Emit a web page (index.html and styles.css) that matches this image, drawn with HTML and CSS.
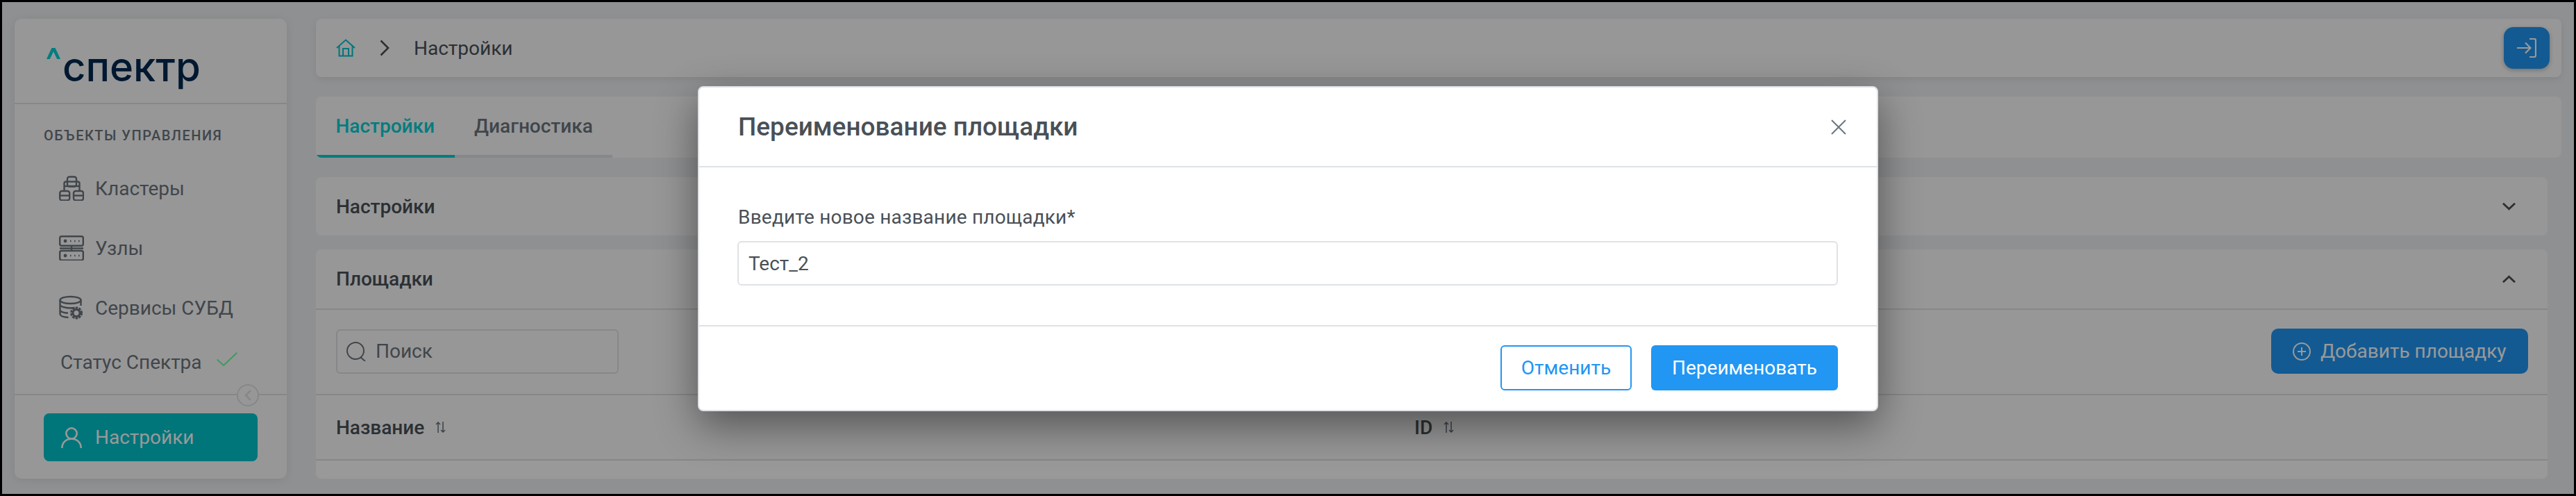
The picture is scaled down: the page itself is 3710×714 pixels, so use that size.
FILE: index.html
```html
<!DOCTYPE html>
<html lang="ru">
  <head>
    <meta charset="UTF-8" />
    <meta name="viewport" content="width=device-width, initial-scale=1.0" />
    <title>Спектр</title>
    <link rel="stylesheet" href="styles.css">
  </head>
  <body>
    <div class="app">
      <!-- sidebar -->
      <aside class="sidebar">
        <div class="logo">
          <svg class="logo-caret" viewBox="0 0 20 16"><path d="M0 16 L7.5 0 H12.5 L20 16 H15.2 L10 5.2 L4.8 16 Z" /></svg>
          <span class="logo-text">спектр</span>
        </div>
        <nav class="nav">
          <div class="nav-title">ОБЪЕКТЫ УПРАВЛЕНИЯ</div>
          <a class="nav-item">
            <svg class="nav-icon" viewBox="0 0 36 36" fill="none" stroke="currentColor" stroke-width="2.4">
              <rect x="12" y="1.5" width="13" height="14" rx="3" />
              <path d="M12 8.5H25" />
              <path d="M12 8.5H10a2.5 2.5 0 0 0-2.5 2.5V22M25 8.5h2a2.5 2.5 0 0 1 2.5 2.5V22" />
              <path d="M7.5 15H29.5" />
              <rect x="1.2" y="22" width="14" height="13.5" rx="3" />
              <path d="M1.2 28.5H15.2" />
              <rect x="21" y="22" width="14" height="13.5" rx="3" />
              <path d="M21 28.5H35" />
            </svg>
            Кластеры
          </a>
          <a class="nav-item">
            <svg class="nav-icon" viewBox="0 0 36 36" fill="none" stroke="currentColor" stroke-width="2.4">
              <rect x="1.2" y="1.2" width="33.6" height="13.6" rx="2.5" />
              <rect x="1.2" y="22" width="33.6" height="13.6" rx="2.5" />
              <path d="M18 15V22M1 18.5H35" />
              <circle cx="9" cy="8" r="2.4" fill="currentColor" stroke="none" />
              <circle cx="9" cy="29" r="2.4" fill="currentColor" stroke="none" />
              <path d="M16 8h1.5M22 8h1.5M28 8h1.5M16 29h1.5M22 29h1.5M28 29h1.5" />
            </svg>
            Узлы
          </a>
          <a class="nav-item">
            <svg class="nav-icon" viewBox="0 0 36 36" fill="none" stroke="currentColor" stroke-width="2.4">
              <ellipse cx="16.5" cy="7" rx="15" ry="5" />
              <path d="M1.5 7V27c0 2.5 4 4.5 12 5M31.5 7V15M1.5 13.5c0 2.5 6 5 15 5 2 0 4-.1 6-.5M1.5 21c0 2.5 5 4.3 11.5 4.8" />
              <circle cx="25" cy="25.5" r="6.5" stroke-width="5" stroke-dasharray="3 1.1" />
              <circle cx="25" cy="25.5" r="5" stroke-width="3" />
            </svg>
            Сервисы СУБД
          </a>
          <div class="nav-status">
            Статус Спектра
            <svg class="status-check" viewBox="0 0 30 20" fill="none" stroke="currentColor" stroke-width="2"><path d="M0.7 10.5 L10 19 L29.3 0.7" /></svg>
          </div>
        </nav>
        <div class="sidebar-footer">
          <span class="collapse-btn">
            <svg viewBox="0 0 12 18" fill="none" stroke="currentColor" stroke-width="2.6"><path d="M10 2 L3 9 L10 16" /></svg>
          </span>
          <a class="settings-btn">
            <svg class="settings-icon" viewBox="0 0 30 30" fill="none" stroke="currentColor" stroke-width="2.6"><circle cx="15" cy="9" r="7.7" /><path d="M1.3 30c0-8 6-13.3 13.7-13.3S28.700 22 28.700 30" /></svg>
            Настройки
          </a>
        </div>
      </aside>

      <!-- main content -->
      <main class="content">
        <header class="topbar">
          <svg class="home-icon" viewBox="0 0 28 26" fill="none" stroke="currentColor" stroke-width="2"><path d="M1 13 L14 1.500 L27 13" /><path d="M4.500 10.500V24.500H23.500V10.500" /><path d="M10 24.500V14H18V24.500" /></svg>
          <svg class="crumb-icon" viewBox="0 0 14 24" fill="none" stroke="currentColor" stroke-width="2.6"><path d="M1.500 1.500 L12 12 L1.500 22.500" /></svg>
          <span class="crumb">Настройки</span>
          <button class="exit-btn">
            <svg viewBox="0 0 28 28" fill="none" stroke="currentColor" stroke-width="2.200"><path d="M0 14H19M12 6.500 L19.500 14 L12 21.500" /><path d="M18 0.800H24.500Q27 .8 27 3.300V24.700Q27 27.200 24.500 27.200H18" /></svg>
          </button>
        </header>

        <div class="tabs">
          <div class="tab tab-active">Настройки</div>
          <div class="tab">Диагностика</div>
        </div>

        <section class="panel">
          <div class="panel-head panel-head-short">
            <span>Настройки</span>
            <svg class="panel-chevron" viewBox="0 0 20 12" fill="none" stroke="currentColor" stroke-width="3"><path d="M1 1.500 L10 10 L19 1.500" /></svg>
          </div>
        </section>

        <section class="panel panel-sites">
          <div class="panel-head">
            <span>Площадки</span>
            <svg class="panel-chevron" viewBox="0 0 20 12" fill="none" stroke="currentColor" stroke-width="3"><path d="M1 10.500 L10 2 L19 10.500" /></svg>
          </div>
          <div class="toolbar">
            <div class="search">
              <svg class="search-icon" viewBox="0 0 28 28" fill="none" stroke="currentColor" stroke-width="2"><circle cx="13" cy="13" r="12" /><path d="M20 22 L27 28" /></svg>
              Поиск
            </div>
            <button class="add-btn">
              <svg class="add-icon" viewBox="0 0 26 26" fill="none" stroke="currentColor" stroke-width="2"><circle cx="13" cy="13" r="12" /><path d="M13 7V19M7 13H19" /></svg>
              Добавить площадку
            </button>
          </div>
          <div class="table-head">
            <div class="th">Название
              <svg class="sort-icon" viewBox="0 0 15 16" fill="none" stroke="currentColor" stroke-width="1.600"><path d="M4 16V1M1 4 L4 1 L7 4M11 0V15M8 12 L11 15 L14 12" /></svg>
            </div>
            <div class="th">ID
              <svg class="sort-icon" viewBox="0 0 15 16" fill="none" stroke="currentColor" stroke-width="1.600"><path d="M4 16V1M1 4 L4 1 L7 4M11 0V15M8 12 L11 15 L14 12" /></svg>
            </div>
          </div>
          <div class="table-rest"></div>
        </section>
      </main>

      <!-- rename dialog -->
      <div class="overlay">
        <div class="modal">
          <div class="modal-head">
            <h3>Переименование площадки</h3>
            <svg class="modal-close" viewBox="0 0 22 22" fill="none" stroke="currentColor" stroke-width="2"><path d="M1 1 L21 21M21 1 L1 21" /></svg>
          </div>
          <div class="modal-body">
            <label class="field-label">Введите новое название площадки*</label>
            <div class="field-input">Тест_2</div>
          </div>
          <div class="modal-foot">
            <button class="btn btn-outline">Отменить</button>
            <button class="btn btn-primary">Переименовать</button>
          </div>
        </div>
      </div>
    </div>
  </body>
</html>
```

FILE: styles.css
```css
:root {
  --bg-color: #eef0f3;
  --card-bg: #fcfcfc;
  --border-color: #dee2e6;
  --text-main: #495057;
  --text-muted: #6c757d;
  --teal: #00c3cb;
  --blue: #2196f3;
}

* {
  box-sizing: border-box;
  margin: 0;
  padding: 0;
}
body {
  font-family: Roboto, "Noto Sans", sans-serif;
  font-size: 28px;
  color: var(--text-main);
  overflow: hidden;
}
button {
  font: inherit;
  border: none;
}

/* page frame */
.app {
  position: relative;
  display: flex;
  gap: 42px;
  height: 714px;
  padding: 24px 18px 22px;
  border: 3px solid #000;
  background-color: var(--bg-color);
  overflow: hidden;
}

/* sidebar */
.sidebar {
  display: flex;
  flex-direction: column;
  flex: 0 0 392px;
  background-color: var(--card-bg);
  border-radius: 10px;
  box-shadow: 0 2px 14px rgba(0, 0, 0, 0.08);
}
.logo {
  display: flex;
  align-items: flex-start;
  height: 123px;
  padding: 42px 0 0 46px;
  border-bottom: 2px solid var(--border-color);
}
.logo-caret {
  width: 20px;
  height: 16px;
  fill: #00d0d6;
  margin-right: 3px;
}
.logo-text {
  font-family: Inter, Roboto, sans-serif;
  font-size: 58px;
  font-weight: 500;
  line-height: 58px;
  color: #002850;
  margin-top: -2px;
}
.nav {
  flex: 1;
  padding-top: 32px;
  color: var(--text-muted);
}
.nav-title {
  margin: 0 0 20px 42px;
  font-size: 20px;
  font-weight: 500;
  line-height: 26px;
  letter-spacing: 1.5px;
}
.nav-item {
  display: flex;
  align-items: center;
  gap: 16px;
  height: 86px;
  padding-left: 64px;
}
.nav-icon {
  width: 36px;
  height: 36px;
}
.nav-status {
  display: flex;
  align-items: center;
  gap: 21px;
  height: 70px;
  padding-left: 66px;
}
.status-check {
  width: 30px;
  height: 20px;
  margin-top: -8px;
  color: #6cff9e;
}
.sidebar-footer {
  position: relative;
  padding: 26px 42px 25px;
  border-top: 2px solid var(--border-color);
}
.collapse-btn {
  position: absolute;
  top: -16px;
  right: 40px;
  display: flex;
  align-items: center;
  justify-content: center;
  width: 32px;
  height: 32px;
  background-color: var(--card-bg);
  border: 2px solid var(--border-color);
  border-radius: 50%;
  color: var(--border-color);
}
.collapse-btn svg {
  width: 12px;
  height: 18px;
}
.settings-btn {
  display: flex;
  align-items: center;
  gap: 19px;
  height: 69px;
  padding-left: 25px;
  background-color: var(--teal);
  border-radius: 8px;
  color: #fff;
}
.settings-icon {
  width: 30px;
  height: 30px;
}

/* main column */
.content {
  flex: 1;
  display: flex;
  flex-direction: column;
  gap: 28px;
  min-width: 0;
}
.topbar {
  display: flex;
  align-items: center;
  height: 84px;
  padding: 0 17px 0 29px;
  background-color: var(--card-bg);
  border-radius: 8px;
  box-shadow: 0 3px 10px rgba(0, 0, 0, 0.08);
  color: var(--text-main);
}
.home-icon {
  width: 28px;
  height: 26px;
  color: var(--teal);
}
.crumb-icon {
  width: 14px;
  height: 24px;
  margin: 0 35px 0 35px;
}
.crumb {
  flex: 1;
}
.exit-btn {
  display: flex;
  align-items: center;
  justify-content: center;
  width: 66px;
  height: 60px;
  background-color: var(--blue);
  border-radius: 14px;
  box-shadow: 0 2px 6px rgba(0, 0, 0, 0.25);
  color: #fff;
}
.exit-btn svg {
  width: 28px;
  height: 28px;
}
.tabs {
  display: flex;
  height: 88px;
  background-color: var(--card-bg);
  border-radius: 8px;
  overflow: hidden;
}
.tab {
  display: flex;
  align-items: center;
  height: 88px;
  padding: 0 28.5px;
  font-weight: 500;
  color: var(--text-muted);
  border-bottom: 4px solid var(--border-color);
}
.tab-active {
  color: #00d0d6;
  border-bottom-color: #00d0d6;
}

/* collapsible panels */
.panel {
  margin-right: 20px;
  background-color: var(--card-bg);
  border-radius: 8px;
}
.panel-sites {
  flex: 1;
  display: flex;
  flex-direction: column;
  margin-top: -8px;
  overflow: hidden;
}
.panel-head {
  display: flex;
  align-items: center;
  justify-content: space-between;
  height: 87px;
  padding: 0 46px 0 29px;
  font-weight: 500;
  border-bottom: 2px solid var(--border-color);
}
.panel-head-short {
  height: 84px;
  border-bottom: none;
}
.panel-chevron {
  width: 19px;
  height: 12px;
}
.toolbar {
  display: flex;
  align-items: center;
  justify-content: space-between;
  height: 123px;
  padding: 0 28px 2px 29px;
  border-bottom: 2px solid var(--border-color);
}
.search {
  display: flex;
  align-items: center;
  gap: 14px;
  width: 407px;
  height: 64px;
  padding-left: 13px;
  border: 2px solid var(--border-color);
  border-radius: 6px;
  color: var(--text-muted);
}
.search-icon {
  width: 28px;
  height: 28px;
}
.add-btn {
  display: flex;
  align-items: center;
  gap: 14px;
  width: 370px;
  height: 65px;
  padding-left: 31px;
  background-color: var(--blue);
  border-radius: 10px;
  color: #fff;
}
.add-icon {
  width: 26px;
  height: 26px;
}
.table-head {
  display: grid;
  grid-template-columns: 1553px 1fr;
  align-items: center;
  height: 94px;
  padding-left: 29px;
  border-bottom: 2px solid var(--border-color);
}
.th {
  display: flex;
  align-items: center;
  gap: 16px;
  font-weight: 500;
}
.sort-icon {
  width: 15px;
  height: 16px;
  color: var(--text-muted);
}
.table-rest {
  flex: 1;
  background-color: #fff;
}

/* dialog over the page */
.overlay {
  position: absolute;
  inset: 0;
  display: flex;
  justify-content: center;
  align-items: flex-start;
  padding-top: 121px;
  background-color: rgba(0, 0, 0, 0.4);
}
.modal {
  width: 1700px;
  height: 468px;
  background-color: #fff;
  border: 2px solid var(--border-color);
  border-radius: 8px;
  box-shadow: 0 20px 60px rgba(0, 0, 0, 0.45);
}
.modal-head {
  display: flex;
  align-items: center;
  justify-content: space-between;
  height: 115px;
  padding: 0 44px 0 56px;
  border-bottom: 2px solid var(--border-color);
}
.modal-head h3 {
  font-size: 37px;
  font-weight: 500;
  color: var(--text-main);
}
.modal-close {
  width: 22px;
  height: 22px;
  color: var(--text-muted);
}
.modal-body {
  height: 229px;
  padding: 56px 56px 0 55px;
  border-bottom: 2px solid var(--border-color);
}
.field-label {
  display: block;
  margin: 0 0 18px 1px;
  line-height: 32px;
  letter-spacing: 0.2px;
}
.field-input {
  display: flex;
  align-items: center;
  height: 64px;
  padding-left: 14px;
  border: 2px solid var(--border-color);
  border-radius: 6px;
}
.modal-foot {
  display: flex;
  justify-content: flex-end;
  gap: 28px;
  padding: 27px 56px 0 0;
}
.btn {
  height: 65px;
  border-radius: 6px;
}
.btn-outline {
  width: 189px;
  background-color: #fff;
  border: 2px solid var(--blue);
  color: var(--blue);
}
.btn-primary {
  width: 269px;
  background-color: var(--blue);
  color: #fff;
}
```
